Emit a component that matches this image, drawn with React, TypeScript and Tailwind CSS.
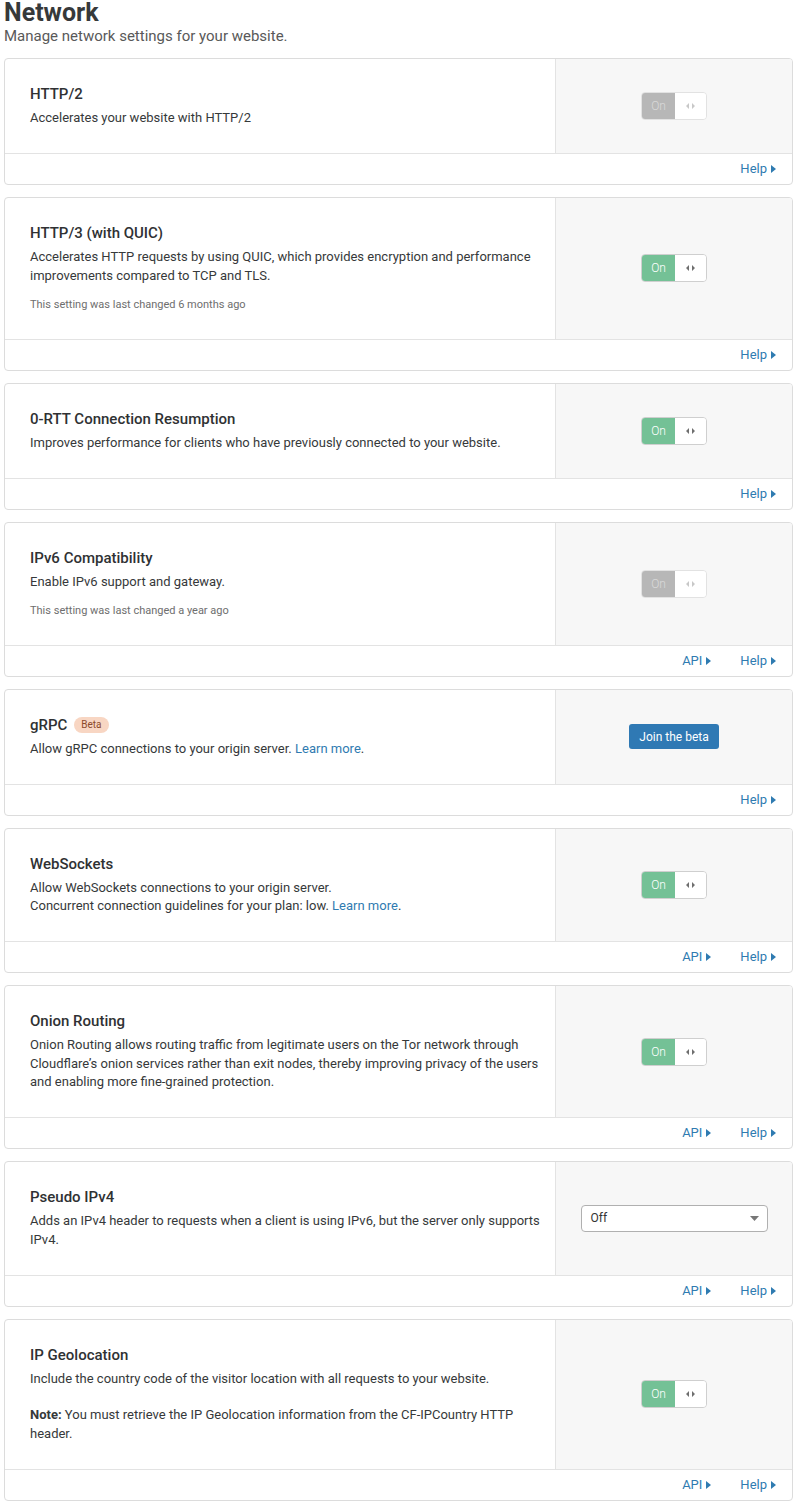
import type { ReactNode } from "react";

type Control =
  | { kind: "toggle"; disabled?: boolean }
  | { kind: "beta" }
  | { kind: "select"; value: string };

type Setting = {
  title: string;
  badge?: string;
  body: ReactNode;
  changed?: string;
  control: Control;
  api?: boolean;
};

const link = "text-[#2f7bb1]";

const settings: Setting[] = [
  {
    title: "HTTP/2",
    body: <p>Accelerates your website with HTTP/2</p>,
    control: { kind: "toggle", disabled: true },
  },
  {
    title: "HTTP/3 (with QUIC)",
    body: (
      <p>
        Accelerates HTTP requests by using QUIC, which provides encryption and performance
        improvements compared to TCP and TLS.
      </p>
    ),
    changed: "This setting was last changed 6 months ago",
    control: { kind: "toggle" },
  },
  {
    title: "0-RTT Connection Resumption",
    body: <p>Improves performance for clients who have previously connected to your website.</p>,
    control: { kind: "toggle" },
  },
  {
    title: "IPv6 Compatibility",
    body: <p>Enable IPv6 support and gateway.</p>,
    changed: "This setting was last changed a year ago",
    control: { kind: "toggle", disabled: true },
    api: true,
  },
  {
    title: "gRPC",
    badge: "Beta",
    body: (
      <p>
        Allow gRPC connections to your origin server. <a className={link}>Learn more</a>.
      </p>
    ),
    control: { kind: "beta" },
  },
  {
    title: "WebSockets",
    body: (
      <>
        <p>Allow WebSockets connections to your origin server.</p>
        <p>
          Concurrent connection guidelines for your plan: low. <a className={link}>Learn more</a>.
        </p>
      </>
    ),
    control: { kind: "toggle" },
    api: true,
  },
  {
    title: "Onion Routing",
    body: (
      <p>
        Onion Routing allows routing traffic from legitimate users on the Tor network through
        Cloudflare’s onion services rather than exit nodes, thereby improving privacy of the users
        and enabling more fine-grained protection.
      </p>
    ),
    control: { kind: "toggle" },
    api: true,
  },
  {
    title: "Pseudo IPv4",
    body: (
      <p>
        Adds an IPv4 header to requests when a client is using IPv6, but the server only supports
        IPv4.
      </p>
    ),
    control: { kind: "select", value: "Off" },
    api: true,
  },
  {
    title: "IP Geolocation",
    body: (
      <>
        <p>Include the country code of the visitor location with all requests to your website.</p>
        <p className="mt-[18px]">
          <strong className="font-bold">Note:</strong> You must retrieve the IP Geolocation
          information from the CF-IPCountry HTTP header.
        </p>
      </>
    ),
    control: { kind: "toggle" },
    api: true,
  },
];

function Caret() {
  return (
    <svg width="5" height="8" viewBox="0 0 5 8" className="ml-[4px] inline-block">
      <path d="M0 0 L5 4 L0 8 Z" fill="currentColor" />
    </svg>
  );
}

function Toggle({ disabled }: { disabled?: boolean }) {
  return (
    <div
      className={`flex h-[28px] w-[66px] overflow-hidden rounded-[4px] border ${
        disabled ? "border-[#e2e2e2]" : "border-[#cfcfcf]"
      }`}
    >
      <div
        className={`flex w-[33px] items-center justify-center text-[12px] font-light ${
          disabled ? "bg-[#b7b7b7] text-[#d9d9d9]" : "bg-[#74c196] text-white"
        }`}
      >
        On
      </div>
      <div className="flex flex-1 items-center justify-center bg-white">
        <svg width="9" height="6" viewBox="0 0 9 6">
          <path d="M3 0 L0 3 L3 6 Z M6 0 L9 3 L6 6 Z" fill={disabled ? "#c8c8c8" : "#6f6f6f"} />
        </svg>
      </div>
    </div>
  );
}

function SettingControl({ control }: { control: Control }) {
  if (control.kind === "beta") {
    return (
      <button className="h-[25px] w-[90px] rounded-[3px] bg-[#2f79b4] text-[12px] text-white">
        Join the beta
      </button>
    );
  }
  if (control.kind === "select") {
    return (
      <div className="flex h-[27px] w-[187px] items-center justify-between rounded-[4px] border border-[#b0b0b0] bg-white pl-[9px] pr-[8px] text-[12px] text-[#333]">
        <span>{control.value}</span>
        <svg width="9" height="5" viewBox="0 0 9 5">
          <path d="M0 0 L9 0 L4.5 5 Z" fill="#777" />
        </svg>
      </div>
    );
  }
  return <Toggle disabled={control.disabled} />;
}

function SettingCard({ setting }: { setting: Setting }) {
  return (
    <div className="overflow-hidden rounded-[4px] border border-[#dcdcdc] bg-white">
      <div className="flex">
        <div className="flex-1 pt-[25px] pb-[25.5px] pl-[25px] pr-[10px]">
          <div className="flex h-[20px] items-center gap-[7px]">
            <h3 className="text-[15px] leading-[20px] font-medium text-[#2f3133]">{setting.title}</h3>
            {setting.badge && (
              <span className="rounded-full bg-[#f8d6c3] px-[7px] text-[10px] leading-[16px] text-[#8b4a2b]">
                {setting.badge}
              </span>
            )}
          </div>
          <div className="mt-[5px] text-[13px] leading-[18.5px] text-[#36393a]">{setting.body}</div>
          {setting.changed && (
            <p className="mt-[12px] text-[11px] leading-[16px] text-[#6e6e6e]">{setting.changed}</p>
          )}
        </div>
        <div className="flex w-[237px] shrink-0 items-center justify-center border-l border-[#e3e3e3] bg-[#f7f7f7]">
          <SettingControl control={setting.control} />
        </div>
      </div>
      <div className="flex h-[31px] items-center justify-end gap-[29px] border-t border-[#e3e3e3] pr-[16px] text-[13px] text-[#2f7bb1]">
        {setting.api && (
          <a className="flex items-center">
            API
            <Caret />
          </a>
        )}
        <a className="flex items-center">
          Help
          <Caret />
        </a>
      </div>
    </div>
  );
}

export default function App() {
  return (
    <div className="min-h-[1502px] bg-white pl-[4px] pr-[7px] font-['Roboto',sans-serif] text-[#333]">
      <h1 className="text-[25px] leading-[26px] font-bold text-[#36393a]">Network</h1>
      <p className="text-[15px] leading-[20px] text-[#595959]">
        Manage network settings for your website.
      </p>
      <div className="mt-[12px] flex flex-col gap-[12px]">
        {settings.map((setting) => (
          <SettingCard key={setting.title} setting={setting} />
        ))}
      </div>
    </div>
  );
}
